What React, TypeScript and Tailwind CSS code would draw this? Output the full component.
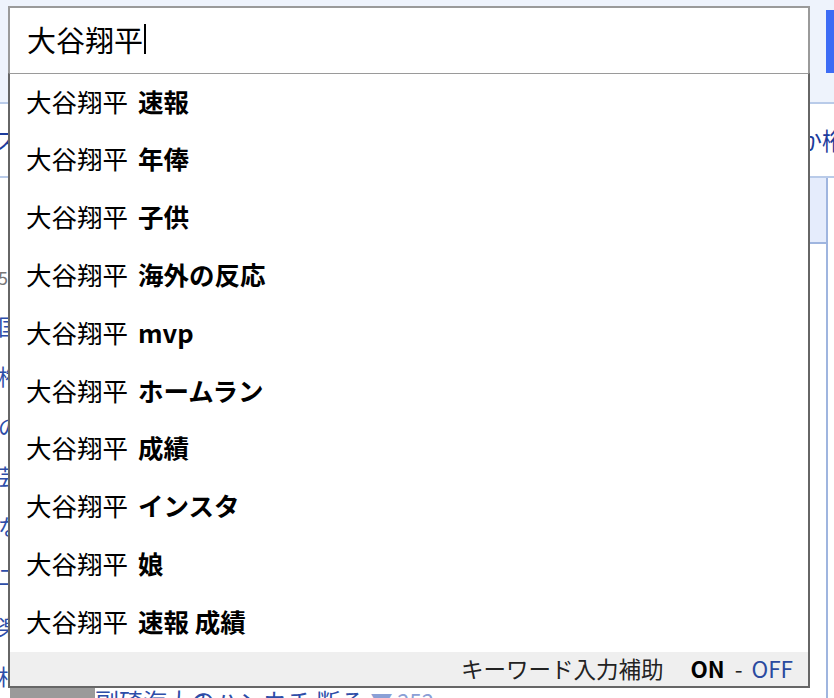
import React from 'react';

const suggestions = ['速報', '年俸', '子供', '海外の反応', 'mvp', 'ホームラン', '成績', 'インスタ', '娘', '速報 成績'];

const font = { fontFamily: '"Hiragino Sans", "Noto Sans CJK JP", "Noto Sans", sans-serif' };

export default function App() {
  return (
    <div className="relative w-[834px] h-[698px] overflow-hidden bg-white" style={font}>
      {/* page behind the suggest box */}
      <div className="h-[104px] bg-[#eef3fc] border-b-2 border-[#b9cbe9] flex justify-end pt-[10px]">
        <div className="w-[8px] h-[63px] bg-[#3d6cf5]" />
      </div>
      <div className="h-[74px] border-b-2 border-[#b9cbe9] flex items-center justify-between text-[24px] text-[#1d3c9c] -mx-[6px]">
        <span>ス</span>
        <span className="-mr-[6px]">か桁</span>
      </div>
      <div className="flex">
        <div className="w-[10px] flex flex-col text-[22px] leading-none text-[#2d4da8] -ml-[2px] pt-[90px] gap-[28px]">
          <span className="text-[#777] text-[18px]">5</span>
          <span>国</span>
          <span>権</span>
          <span>の</span>
          <span>芸</span>
          <span>な</span>
          <span>二</span>
          <span>楽</span>
          <span>相</span>
        </div>
        <div className="flex-1" />
        <div className="w-[18px] mr-[6px] border-r-2 border-[#9fb5df] h-[520px]">
          <div className="h-[66px] bg-[#e5ecfc] border-b-2 border-[#9fb5df]" />
        </div>
      </div>

      {/* search input + suggestions overlay */}
      <div className="absolute left-[8px] top-[6px] w-[802px]">
        <div className="h-[67px] border-2 border-[#9a9a9a] border-b-0 bg-white flex items-center pl-[17px] pb-[3px]">
          <span className="text-[29px] text-black leading-none">大谷翔平</span>
          <span className="w-[2px] h-[30px] bg-black ml-[1px]" />
        </div>
        <div className="border-2 border-t-[1px] border-[#666] border-t-[#9a9a9a] bg-white">
          {suggestions.map(s => (
            <div key={s} className="h-[57.8px] flex items-center pl-[16px] pb-[5px] text-[25.5px] text-black leading-none">
              <span>大谷翔平</span>
              <span className="font-bold ml-[10px]">{s}</span>
            </div>
          ))}
          <div className="h-[34px] bg-[#efefef] flex items-center justify-end pr-[15px] pb-[1px] text-[22.5px] leading-none">
            <span className="text-[#222]">キーワード入力補助</span>
            <span className="font-bold ml-[27px]">ON</span>
            <span className="ml-[10px] text-[#222]">-</span>
            <span className="ml-[9px] text-[#2a4a9f]">OFF</span>
          </div>
        </div>
      </div>

      {/* bottom row peeking out */}
      <div className="absolute left-[10px] top-[688px] flex items-start">
        <div className="w-[85px] h-[10px] bg-[#9a9a9a]" />
        <span className="text-[24px] leading-none mt-[1px] text-[#2d4da8]">副碕海大のハンカチ 断る</span>
        <span className="text-[22px] leading-none ml-[6px] mt-[1px] text-[#8aa0d6]">▼ 252</span>
      </div>
    </div>
  );
}
